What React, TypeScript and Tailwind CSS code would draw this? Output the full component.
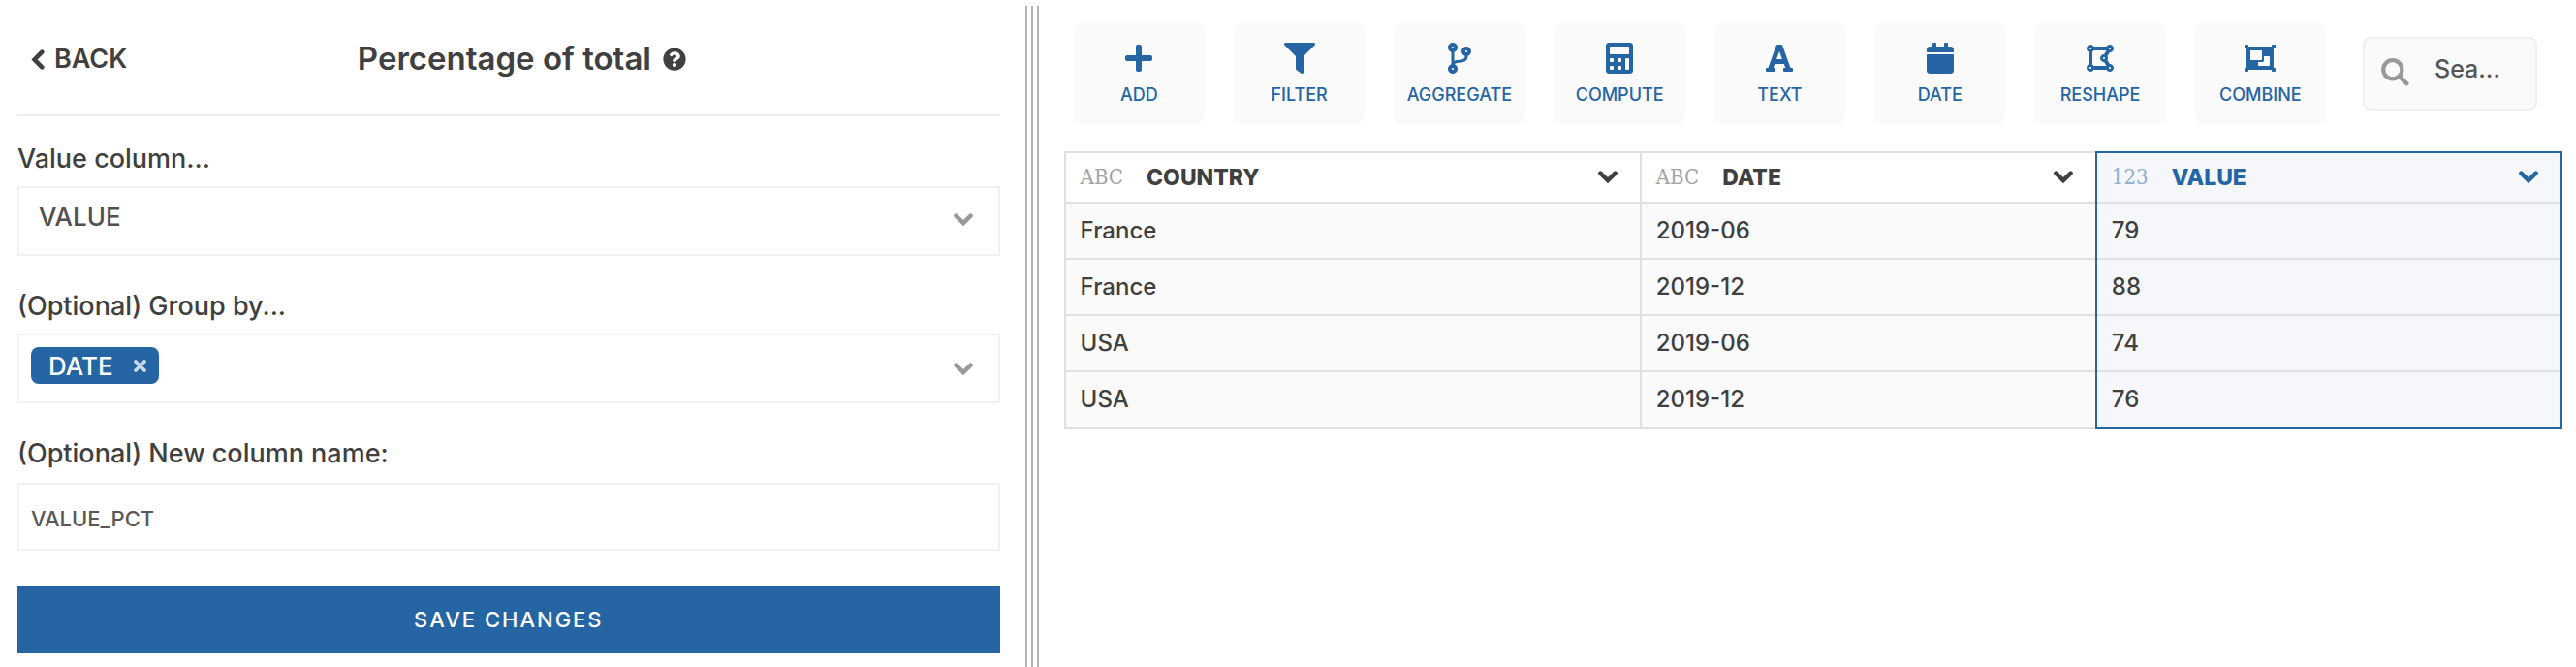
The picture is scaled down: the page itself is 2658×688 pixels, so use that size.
import { useState } from 'react';
import type { ReactNode } from 'react';
import type { IconType } from 'react-icons';
import {
  FaCalculator,
  FaCalendar,
  FaCodeBranch,
  FaDrawPolygon,
  FaFilter,
  FaFont,
  FaObjectGroup,
  FaPlus,
  FaQuestionCircle,
  FaTimes,
} from 'react-icons/fa';

const actions: { label: string; Icon: IconType }[] = [
  { label: 'ADD', Icon: FaPlus },
  { label: 'FILTER', Icon: FaFilter },
  { label: 'AGGREGATE', Icon: FaCodeBranch },
  { label: 'COMPUTE', Icon: FaCalculator },
  { label: 'TEXT', Icon: FaFont },
  { label: 'DATE', Icon: FaCalendar },
  { label: 'RESHAPE', Icon: FaDrawPolygon },
  { label: 'COMBINE', Icon: FaObjectGroup },
];

const columns = [
  { name: 'COUNTRY', type: 'ABC', selected: false, width: 'w-[594px]' },
  { name: 'DATE', type: 'ABC', selected: false, width: 'w-[470px]' },
  { name: 'VALUE', type: '123', selected: true, width: 'w-[482px]' },
];

const rows = [
  ['France', '2019-06', '79'],
  ['France', '2019-12', '88'],
  ['USA', '2019-06', '74'],
  ['USA', '2019-12', '76'],
];

function ChevronDown({ className }: { className: string }) {
  return (
    <svg viewBox="0 0 20 14" fill="none" className={className} aria-hidden="true">
      <path d="M2.4 2.6 10 10 17.6 2.6" stroke="currentColor" strokeWidth="4.5" strokeLinecap="round" />
    </svg>
  );
}

function ChevronLeft({ className }: { className: string }) {
  return (
    <svg viewBox="0 0 14 21" fill="none" className={className} aria-hidden="true">
      <path d="M11.3 2.6 3.6 10.5 11.3 18.4" stroke="currentColor" strokeWidth="4.6" strokeLinecap="round" />
    </svg>
  );
}

function SearchIcon({ className }: { className: string }) {
  return (
    <svg viewBox="0 0 29 29" fill="none" className={className} aria-hidden="true">
      <circle cx="11.8" cy="11.8" r="9.6" stroke="currentColor" strokeWidth="4.3" />
      <path d="M19.2 19.2 26.2 26.2" stroke="currentColor" strokeWidth="4.6" strokeLinecap="round" />
    </svg>
  );
}

function Label({ htmlFor, children }: { htmlFor: string; children: ReactNode }) {
  return (
    <label htmlFor={htmlFor} className="text-[27px] leading-8 font-medium text-[#404040]">
      {children}
    </label>
  );
}

function StepForm() {
  const [groups, setGroups] = useState(['DATE']);
  const [name, setName] = useState('VALUE_PCT');
  return (
    <form className="flex flex-col pr-[26px] pl-[18px]" onSubmit={(e) => e.preventDefault()}>
      <header className="flex h-[120px] items-center border-b-2 border-[#eeeeee] pt-1 pl-3.5 text-[#404040]">
        <button type="button" className="flex items-center gap-2.5 text-[27px] font-semibold">
          <ChevronLeft className="h-[21px] w-3.5" />
          BACK
        </button>
        <h1 className="flex flex-1 items-center justify-center gap-3 pr-[86px] text-[33px] font-semibold">
          Percentage of total
          <FaQuestionCircle className="size-6" />
        </h1>
      </header>

      <div className="mt-7 flex flex-col gap-3">
        <Label htmlFor="value-column">Value column...</Label>
        <div className="relative">
          <select
            id="value-column"
            className="block h-[72px] w-full appearance-none border-2 border-[#f1f1f1] bg-white pr-16 pb-2.5 pl-5 text-[26px] font-medium text-[#505050]"
          >
            <option>VALUE</option>
            <option>COUNTRY</option>
            <option>DATE</option>
          </select>
          <ChevronDown className="pointer-events-none absolute top-7 right-[27px] h-3.5 w-[22px] text-[#999999]" />
        </div>
      </div>

      <div className="mt-9 flex flex-col gap-3">
        <Label htmlFor="group-by">(Optional) Group by...</Label>
        <div className="flex h-[72px] items-start border-2 border-[#f1f1f1] pt-3 pr-[25px] pl-3">
          {groups.map((g) => (
            <span
              key={g}
              className="flex h-[38px] items-center gap-[18px] rounded-lg bg-[#2665a3] pr-2.5 pl-[18px] text-[26px] font-medium text-white"
            >
              {g}
              <button
                type="button"
                aria-label={`Remove ${g}`}
                onClick={() => setGroups(groups.filter((x) => x !== g))}
              >
                <FaTimes className="size-[19px] text-[#c9d9e9]" />
              </button>
            </span>
          ))}
          <input id="group-by" className="h-[38px] min-w-0 flex-1 px-3 text-[26px] outline-none" />
          <button type="button" aria-label="Open list" className="pt-4">
            <ChevronDown className="h-3.5 w-[22px] text-[#999999]" />
          </button>
        </div>
      </div>

      <div className="mt-9 flex flex-col gap-3.5">
        <Label htmlFor="column-name">(Optional) New column name:</Label>
        <input
          id="column-name"
          value={name}
          onChange={(e) => setName(e.target.value)}
          className="h-[70px] border-2 border-[#f1f1f1] px-3 pt-1 text-[22px] font-medium text-[#585858]"
        />
      </div>

      <button
        type="submit"
        className="mt-9 h-[70px] bg-[#2665a3] text-[22px] font-medium tracking-[2px] text-white"
      >
        SAVE CHANGES
      </button>
    </form>
  );
}

function Toolbar() {
  return (
    <div className="flex items-center gap-[38px] pr-10 pl-9">
      <nav className="flex flex-1 gap-[30px]">
        {actions.map(({ label, Icon }) => (
          <button
            key={label}
            type="button"
            className="flex h-[104px] min-w-0 flex-1 flex-col items-center gap-[10px] rounded-lg bg-[#fafafa] pt-5 text-[18px] leading-6 font-medium text-[#2665a3]"
          >
            <Icon className="size-8" />
            {label}
          </button>
        ))}
      </nav>
      <label className="flex h-[76px] w-[180px] items-center gap-[26px] rounded-lg border-2 border-[#f0f0f0] bg-[#fafafa] pr-[34px] pb-2 pl-[17px]">
        <SearchIcon className="mt-1 size-[29px] shrink-0 text-[#999999]" />
        <input
          aria-label="Search"
          placeholder="Search"
          className="min-w-0 flex-1 text-[25px] font-medium text-ellipsis outline-none placeholder:text-[#555555]"
        />
      </label>
    </div>
  );
}

function DataTable() {
  return (
    <div className="mt-7 pr-[14px] pl-[26px]">
      <table className="w-full table-fixed border-separate border-spacing-0">
        <thead>
          <tr className="h-[54px]">
            {columns.map((c) => (
              <th
                key={c.name}
                className={`${c.width} border-t-2 border-l-2 px-[15px] pt-0 pb-0.5 text-left shadow-[inset_0_-2px_#e0e0e0] ${
                  c.selected
                    ? 'border-r-2 border-[#2665a3] bg-[#f5f7fb] text-[#2665a3]'
                    : 'border-[#e0e0e0] bg-white text-[#404040]'
                }`}
              >
                <div className="flex items-center pr-2">
                  <span
                    className={`font-['DejaVu_Serif_Condensed','DejaVu_Serif',serif] text-[22px] leading-8 font-normal ${
                      c.selected ? 'text-[#8fafd0]' : 'text-[#a3a3a3]'
                    }`}
                  >
                    {c.type}
                  </span>
                  <span className="ml-6 flex-1 text-[23px] leading-8 font-extrabold">{c.name}</span>
                  <button type="button" aria-label={`${c.name} menu`}>
                    <ChevronDown className="h-3.5 w-5" />
                  </button>
                </div>
              </th>
            ))}
          </tr>
        </thead>
        <tbody className="text-[24px] font-medium text-[#404040]">
          {rows.map((row, r) => (
            <tr key={r} className="h-[58px]">
              {row.map((cell, i) => (
                <td
                  key={i}
                  className={`border-l-2 px-[15px] pt-0 pb-0.5 ${
                    columns[i].selected
                      ? `border-r-2 border-[#2665a3] bg-[#f5f7fb] ${
                          r === rows.length - 1
                            ? 'shadow-[inset_0_-2px_#2665a3]'
                            : 'shadow-[inset_0_-2px_#e0e0e0]'
                        }`
                      : 'border-[#e0e0e0] bg-[#fafafa] shadow-[inset_0_-2px_#e0e0e0]'
                  }`}
                >
                  {cell}
                </td>
              ))}
            </tr>
          ))}
        </tbody>
      </table>
    </div>
  );
}

export default function App() {
  return (
    <main className="grid min-h-screen grid-cols-[minmax(0,2fr)_auto_minmax(0,3fr)] bg-white font-['Inter',sans-serif]">
      <StepForm />
      <div className="mt-1.5 flex w-[14px] justify-between border-x-2 border-[#b5b5b5]">
        <div className="mx-auto w-0.5 bg-[#b5b5b5]" />
      </div>
      <section className="pt-6">
        <Toolbar />
        <DataTable />
      </section>
    </main>
  );
}
